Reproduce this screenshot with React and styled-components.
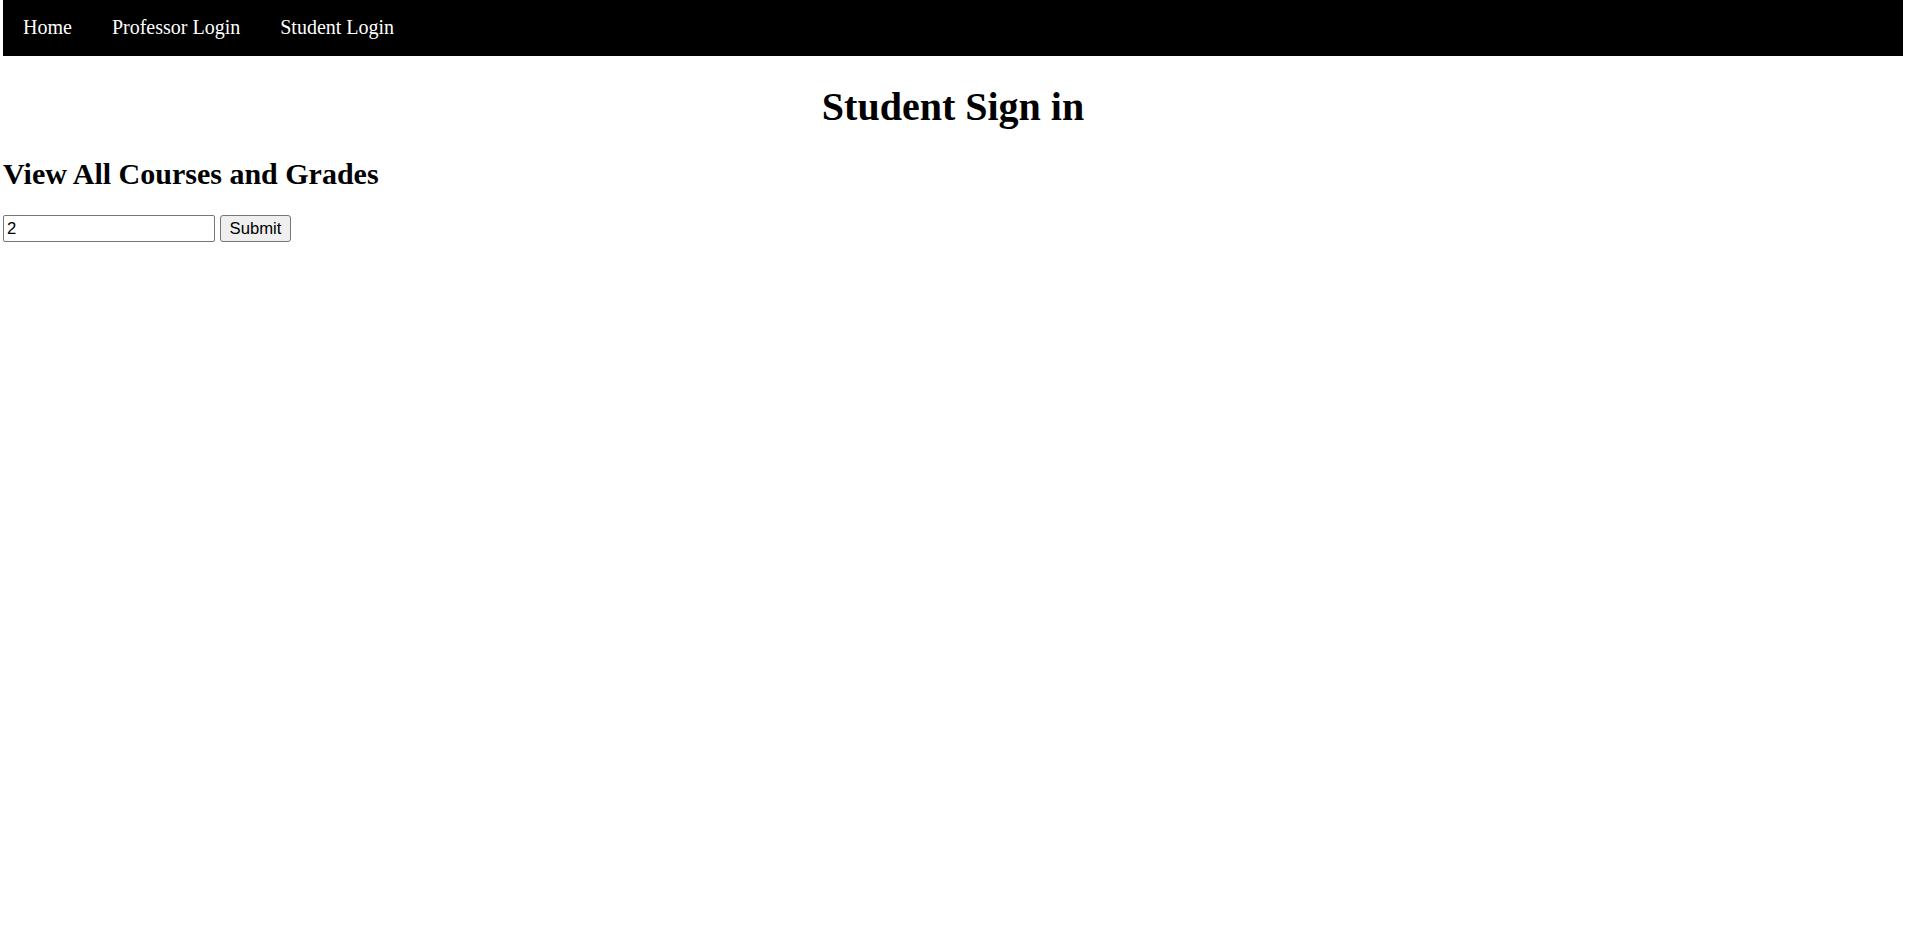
import React from "react";
import styled, { createGlobalStyle } from "styled-components";

const Global = createGlobalStyle`
  html, body { margin: 0; padding: 0; background: #fff; }
  body { font-family: "Liberation Serif", "Times New Roman", serif; color: #000; }
`;

const Page = styled.div`
  padding: 0 4px 0 3px;
`;

const NavBar = styled.ul`
  list-style: none;
  margin: 0;
  padding: 0;
  background: #000;
  display: flex;
  height: 56px;
`;

const NavItem = styled.li`
  display: flex;
`;

const NavLink = styled.a`
  display: flex;
  align-items: center;
  padding: 0 20px 1px;
  color: #fff;
  text-decoration: none;
  font-size: 20px;
  line-height: 23px;
`;

const Title = styled.h1`
  font-size: 40px;
  font-weight: bold;
  text-align: center;
  margin: 26.8px 0;
`;

const Subtitle = styled.h2`
  font-size: 30px;
  font-weight: bold;
  margin: 24.9px 0;
`;

const Form = styled.form`
  display: flex;
  gap: 5px;
`;

const TextInput = styled.input`
  box-sizing: border-box;
  width: 212px;
  height: 27px;
  border: 1px solid #767676;
  border-radius: 2px;
  padding: 1px 3px;
  font-family: "Liberation Sans", Arial, sans-serif;
  font-size: 16.67px;
  color: #000;
  background: #fff;
`;

const SubmitButton = styled.button`
  box-sizing: border-box;
  width: 71px;
  height: 27px;
  border: 1px solid #767676;
  border-radius: 3px;
  background: #efefef;
  padding: 0 8px;
  font-family: "Liberation Sans", Arial, sans-serif;
  font-size: 16.67px;
  color: #000;
`;

export default function App() {
  return (
    <Page>
      <Global />
      <NavBar>
        <NavItem><NavLink href="#">Home</NavLink></NavItem>
        <NavItem><NavLink href="#">Professor Login</NavLink></NavItem>
        <NavItem><NavLink href="#">Student Login</NavLink></NavItem>
      </NavBar>
      <Title>Student Sign in</Title>
      <Subtitle>View All Courses and Grades</Subtitle>
      <Form onSubmit={(e) => e.preventDefault()}>
        <TextInput type="text" defaultValue="2" />
        <SubmitButton type="submit">Submit</SubmitButton>
      </Form>
    </Page>
  );
}
